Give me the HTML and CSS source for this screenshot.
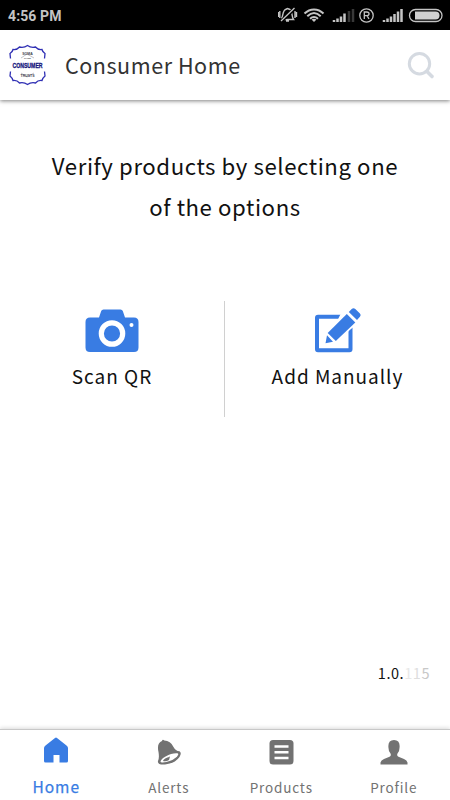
FILE: index.html
```html
<!DOCTYPE html>
<html lang="en">
<head>
<meta charset="utf-8">
<title>Consumer Home</title>
<link rel="stylesheet" href="styles.css">
</head>
<body>
<div class="status">
  <span class="time">4:56 PM</span>
  <svg class="status-icons" width="172" height="30" viewBox="0 0 172 30" fill="none" stroke="#c4c4c4">
    <path d="M5 18.500C6.500 17 6 10.500 9 9.500L11 8.500L13.500 9.500C16 11 15 17 17 19.500H5.500M9.500 21h3M1.800 12v5M3.300 11v7M18.500 11v7M20 12v5" stroke-width="1.400" transform="translate(-1.500 0)"/>
    <path d="M2.500 22L17 8" stroke="#000" stroke-width="3.500"/><path d="M3 21L16.500 8" stroke-width="1.300"/>
    <path d="M27.500 13.500C33 8 41 8 46.500 13.500M30.300 16.200C34.500 12.200 39.500 12.200 43.700 16.200M33 18.700C35.500 16.500 38.500 16.500 41 18.700" stroke-width="2" transform="translate(-1 0)"/>
    <path d="M33.500 19.500Q36 17.800 38.500 19.500L36 22Z" fill="#c4c4c4" stroke="none"/>
    <path d="M56 20v2M59.500 18.500v3.500M63 16.500v5.500M66.500 13.500v8.500" stroke-width="2.500"/>
    <path d="M71 11v11M75 9v13" stroke="#383838" stroke-width="2.500"/>
    <circle cx="88.500" cy="15.500" r="6.700" stroke-width="1.300"/>
    <path d="M86.300 19v-7h2.500c3 0 3 3.700 0 3.700h-2.500m2.700 0 2 3.300" stroke-width="1.300"/>
    <path d="M106 20v2M109.500 18.500v3.500M113 16.500v5.500M116.500 14v8M120 11.500v10.500M123.500 9v13" stroke-width="2.500"/>
    <rect x="131.500" y="9.500" width="32.500" height="12" rx="6" stroke-width="1.300"/>
    <path d="M137 11.500h20.500a4 4 0 0 1 0 8H137z" fill="#d0d0d0" stroke="none"/>
  </svg>
</div>
<header class="header">
  <svg class="logo" width="40" height="44" viewBox="0 0 40 44">
    <g fill="none" stroke="#3030b4" stroke-width="1.300">
      <path d="M2.500 15.500L2 10.500Q4.500 9 5 6.500Q9 7 11.500 4Q16 5 19.500 2.500Q23 5 27.500 4Q30 7 34 6.500Q34.500 9 37 10.500L36.500 15.500"/>
      <path d="M2.500 28.500L2 33Q4.500 35 5 37.500Q9 37 11.500 40Q16 39 19.500 41.500Q23 39 27.500 40Q30 37 34 37.500Q34.500 35 37 33L36.500 28.500"/>
    </g>
    <path d="M13 15L19 11L26 15M13 30L19 34L26 30" fill="none" stroke="#b4b4bc" stroke-width=".8"/>
    <text class="logo-small" x="19.500" y="12">SOMA</text>
    <text class="logo-tiny" x="19.500" y="16">CARE</text>
    <text class="logo-name" transform="translate(19.500 24.500) scale(.74 1)">CONSUMER</text>
    <text class="logo-small" x="19.500" y="34.300">TRUSTS</text>
  </svg>
  <h1 class="title">Consumer Home</h1>
  <svg class="search" width="30" height="30" viewBox="0 0 30 30" fill="none" stroke="#d5dae1">
    <circle cx="13.500" cy="13.700" r="10.200" stroke-width="3"/>
    <path d="M21 21.500L26 26.500" stroke-width="3.600" stroke-linecap="round"/>
  </svg>
</header>
<main class="main">
  <p class="prompt">Verify products by selecting one<br>of the options</p>
  <div class="options">
    <div class="option">
      <svg width="54" height="46" viewBox="0 0 54 46">
        <path d="M5 9.500H14L16.200 3Q16.700 1.500 18.500 1.500H35.500Q37.300 1.500 37.800 3L40 9.500H49Q53.500 9.500 53.500 14V39.500Q53.500 44 49 44H5Q.5 44 .5 39.500V14Q.5 9.500 5 9.500Z" fill="#397ce3"/>
        <circle cx="27" cy="25.500" r="10.700" fill="none" stroke="#fff" stroke-width="5.200"/>
        <circle cx="46.500" cy="17" r="2" fill="#fff"/>
      </svg>
      <span class="option-label">Scan QR</span>
    </div>
    <div class="option">
      <svg width="50" height="46" viewBox="0 0 50 46">
        <g transform="translate(0 -.7)">
          <rect x="4" y="9.500" width="33.500" height="33.500" rx="1" fill="none" stroke="#397ce3" stroke-width="4"/>
          <path d="M28 6H43V18L36 23L24 14Z" fill="#fff"/>
          <path d="M10.500 38L13 24.500L34 3.500L45 14.500L24 35.500Z" fill="#fff"/>
          <path d="M12.500 36L14 28L20 34.500Z" fill="#397ce3"/>
          <path d="M14.700 25.800L33.800 6.700L42.300 15.200L22.800 33.800Z" fill="#397ce3"/>
          <path d="M35.800 4.700L38.700 1.700Q40.500 0 42.300 1.700L46.700 6Q48.500 7.800 46.700 9.600L44 12.700Z" fill="#397ce3"/>
        </g>
      </svg>
      <span class="option-label">Add Manually</span>
    </div>
  </div>
  <p class="version">1.0.<span class="v1">1</span><span class="v2">1</span><span class="v3">5</span></p>
</main>
<nav class="nav">
  <div class="tab active">
    <svg width="30" height="30" viewBox="0 0 30 30" fill="currentColor"><path d="M15 2.500Q15.500 2.500 16 3L25.500 10.500Q27 11.700 27 13V26Q27 27.500 25.500 27.500H18.500V20H12.500V27.500H4.500Q3 27.500 3 26V13Q3 11.700 4.500 10.500L14 3Q14.500 2.500 15 2.500Z"/></svg>
    <span>Home</span>
  </div>
  <div class="tab">
    <svg width="30" height="30" viewBox="0 0 30 30" fill="currentColor">
      <path d="M4 26Q5.500 23 4.500 17Q2.500 8 8 6Q8.500 4 10.300 5.500Q16.500 5.500 19.500 12Q21.500 16 25.500 16.300Q28 18 25.500 22Q21 28.500 11 29.500Q3 30 4 26Z"/>
      <path d="M6.500 26.500C7 23 17 17.500 23.500 18.300C26 19 22 23.500 17 25.600C12 27.600 6.500 28.400 6.500 26.500Z" fill="#fff"/>
      <path d="M9 26C10 23 14.500 22.500 16 21.500L15 25Q12 27 9 26Z"/>
    </svg>
    <span>Alerts</span>
  </div>
  <div class="tab">
    <svg width="30" height="30" viewBox="0 0 30 30"><rect x="3.500" y="5" width="24" height="24.500" rx="3.500" fill="currentColor"/><path d="M8.500 11.500h14M8.500 17.300h14M8.500 23h14" stroke="#fff" stroke-width="2.600"/></svg>
    <span>Products</span>
  </div>
  <div class="tab">
    <svg width="30" height="30" viewBox="0 0 30 30" fill="currentColor"><path d="M1.500 29.500V27.500Q2 25 5 24L10.500 21.700Q12.500 21 11.500 18.500Q9.500 16.500 9.500 13Q8.500 5 15 5Q21.500 5 20.500 13Q20.500 16.500 18.500 18.500Q17.500 21 19.500 21.700L25 24Q28 25 28.500 27.500V29.500Z"/></svg>
    <span>Profile</span>
  </div>
</nav>
</body>
</html>
```
FILE: styles.css
```css
* { box-sizing: border-box; }

body {
  margin: 0;
  width: 450px;
  height: 800px;
  display: flex;
  flex-direction: column;
  overflow: hidden;
  background: #fff;
  color: #111;
  font-family: "Noto Sans CJK SC", "Noto Sans", sans-serif;
}

svg { display: block; flex: none; }

.status {
  height: 30px;
  flex: none;
  display: flex;
  align-items: center;
  justify-content: space-between;
  padding-left: 8px;
  background: #000;
  color: #c4c4c4;
}

.time { font: bold 14px/30px Roboto, sans-serif; padding-top: 1px; letter-spacing: .1px; }

.header {
  height: 70px;
  flex: none;
  display: flex;
  align-items: center;
  padding: 0 14px 0 8px;
  background: #fff;
  box-shadow: 0 1px 4px rgba(0, 0, 0, .5);
}

.logo { overflow: visible; }
.logo text { text-anchor: middle; font-family: "Liberation Sans", sans-serif; font-weight: bold; }
.logo .logo-name { font-size: 7px; fill: #15157c; stroke: #15157c; stroke-width: .3px; }
.logo .logo-small { font-size: 3.500px; fill: #444450; }
.logo .logo-tiny { font-size: 2.500px; fill: #444450; }

.title {
  margin: 0 0 0 17px;
  font-size: 21.500px;
  line-height: 40px;
  font-weight: 400;
  letter-spacing: .55px;
  color: #333;
}

.search { margin-left: auto; }

.main { flex: 1; display: flex; flex-direction: column; }

.prompt {
  margin: 45px 0 0;
  text-align: center;
  font-size: 22.200px;
  line-height: 41px;
  letter-spacing: .58px;
}

.options {
  display: grid;
  grid-template-columns: 225px 225px;
  margin-top: 74px;
  height: 116px;
}

.option { display: flex; flex-direction: column; align-items: center; padding-top: 7px; }
.option:first-child { border-right: 1.500px solid #d0d0d0; }

.option-label { font-size: 19px; line-height: 30px; margin-top: 7px; letter-spacing: .98px; }

.version {
  margin: auto 20px 45px 0;
  text-align: right;
  font-size: 14.500px;
  line-height: 22px;
  letter-spacing: .55px;
}

.v1 { color: #e8e8e8; }
.v2 { color: #dedede; }
.v3 { color: #c8c8c8; }

.nav {
  height: 71px;
  flex: none;
  display: grid;
  grid-template-columns: repeat(4, 1fr);
  border-top: 1px solid #c8c8c8;
  box-shadow: 0 -1px 4px rgba(0, 0, 0, .15);
}

.tab {
  display: flex;
  flex-direction: column;
  align-items: center;
  padding-top: 5px;
  color: #727272;
  font-size: 13.500px;
  line-height: 20px;
  letter-spacing: .85px;
}

.tab span { margin-top: 12px; }
.tab.active { color: #397ce3; font-size: 15.500px; letter-spacing: 1px; }
.active span { margin-top: 11px; -webkit-text-stroke: .25px currentColor; }
```
